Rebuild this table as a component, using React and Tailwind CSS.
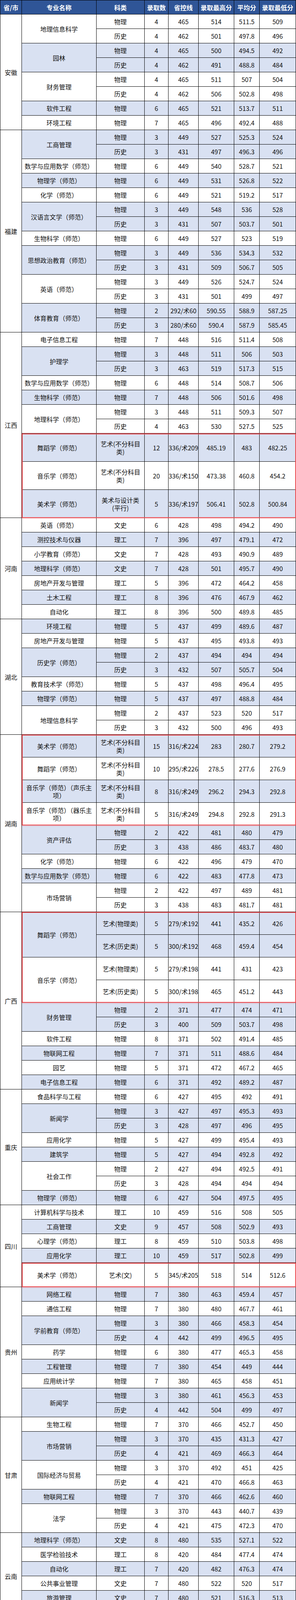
import React from "react";

const WL = "物理", HS = "历史", WS = "文史", LG = "理工", PT = "普通";
const ART = "艺术(不分科目\n类)";

const DATA = [
  { p: "安徽", g: [
    { m: "地理信息科学", r: [[WL,"4","465","514","511.5","509"],[HS,"4","462","501","497.8","496"]] },
    { m: "园林", r: [[WL,"4","465","500","494.5","492"],[HS,"4","462","491","488.8","484"]] },
    { m: "财务管理", r: [[WL,"4","465","511","507","504"],[HS,"4","462","506","502.8","498"]] },
    { m: "软件工程", r: [[WL,"6","465","521","513.7","511"]] },
    { m: "环境工程", r: [[WL,"7","465","496","492.4","488"]] },
  ]},
  { p: "福建", g: [
    { m: "工商管理", r: [[WL,"3","449","527","525.3","524"],[HS,"3","431","497","496.3","496"]] },
    { m: "数学与应用数学（师范）", r: [[WL,"6","449","540","528.7","521"]] },
    { m: "物理学（师范）", r: [[WL,"6","449","531","526.8","522"]] },
    { m: "化学（师范）", r: [[WL,"6","449","521","519.2","517"]] },
    { m: "汉语言文学（师范）", r: [[WL,"3","449","548","536","528"],[HS,"3","431","507","503.7","501"]] },
    { m: "生物科学（师范）", r: [[WL,"6","449","527","523","519"]] },
    { m: "思想政治教育（师范）", r: [[WL,"3","449","536","534.3","532"],[HS,"3","431","509","506.7","505"]] },
    { m: "英语（师范）", r: [[WL,"3","449","526","524.7","524"],[HS,"3","431","501","499","497"]] },
    { m: "体育教育（师范）", r: [[WL,"2","292/术60","590.55","588.9","587.25"],[HS,"3","280/术60","590.4","587.9","585.45"]] },
  ]},
  { p: "江西", g: [
    { m: "电子信息工程", r: [[WL,"7","448","516","511.4","508"]] },
    { m: "护理学", r: [[WL,"3","448","511","506","503"],[HS,"3","463","519","517.3","515"]] },
    { m: "数学与应用数学（师范）", r: [[WL,"6","448","514","508.7","506"]] },
    { m: "生物科学（师范）", r: [[WL,"7","448","506","501.6","498"]] },
    { m: "地理科学（师范）", r: [[WL,"3","448","511","509.3","507"],[HS,"4","463","530","527.5","525"]] },
    { m: "舞蹈学（师范）", hl: true, h: "h-[72px]", r: [[ART,"12","336/术209","485.19","483","482.25"]] },
    { m: "音乐学（师范）", hl: true, h: "h-[72px]", r: [[ART,"20","336/术150","473.38","460.8","454.2"]] },
    { m: "美术学（师范）", hl: true, h: "h-[72px]", r: [["美术与设计类\n(平行)","5","336/术197","506.41","502.8","500.84"]] },
  ]},
  { p: "河南", g: [
    { m: "英语（师范）", r: [[WS,"6","428","498","494.2","490"]] },
    { m: "测控技术与仪器", r: [[LG,"7","396","497","479.1","472"]] },
    { m: "小学教育（师范）", r: [[WS,"7","428","493","490.9","489"]] },
    { m: "地理科学（师范）", r: [[WS,"7","428","501","495.7","490"]] },
    { m: "房地产开发与管理", r: [[LG,"5","396","472","464.2","458"]] },
    { m: "土木工程", r: [[LG,"8","396","476","467.9","462"]] },
    { m: "自动化", r: [[LG,"8","396","500","489.8","485"]] },
  ]},
  { p: "湖北", g: [
    { m: "环境工程", r: [[WL,"5","437","499","489.6","487"]] },
    { m: "房地产开发与管理", r: [[WL,"5","437","495","493.8","493"]] },
    { m: "历史学（师范）", r: [[WL,"2","437","494","494","494"],[HS,"3","432","507","505.7","504"]] },
    { m: "教育技术学（师范）", r: [[WL,"5","437","498","496.4","495"]] },
    { m: "物理学（师范）", r: [[WL,"5","437","497","488.8","484"]] },
    { m: "地理信息科学", r: [[WL,"2","437","523","520","517"],[HS,"3","432","500","496","493"]] },
  ]},
  { p: "湖南", g: [
    { m: "美术学（师范）", hl: true, h: "h-[58px]", r: [[ART,"15","316/术224","283","280.7","279.2"]] },
    { m: "舞蹈学（师范）", hl: true, h: "h-[58px]", r: [[ART,"10","295/术226","278.5","277.6","276.9"]] },
    { m: "音乐学（师范）（声乐主\n项）", hl: true, h: "h-[58px]", r: [[ART,"8","316/术249","296.2","294.3","292.8"]] },
    { m: "音乐学（师范）（器乐主\n项）", hl: true, h: "h-[58px]", r: [[ART,"5","316/术249","294.8","292.8","291.3"]] },
    { m: "资产评估", r: [[WL,"2","422","481","480","479"],[HS,"3","438","486","483.7","480"]] },
    { m: "化学（师范）", r: [[WL,"6","422","496","479","470"]] },
    { m: "数学与应用数学（师范）", r: [[WL,"6","422","483","477.8","473"]] },
    { m: "市场营销", r: [[WL,"2","422","497","489","481"],[HS,"3","438","483","481.7","481"]] },
  ]},
  { p: "广西", g: [
    { m: "舞蹈学（师范）", hl: true, h: "h-[58px]", r: [["艺术(物理类)","5","279/术192","441","435.2","426"],["艺术(历史类)","5","300/术192","468","459.4","454"]] },
    { m: "音乐学（师范）", hl: true, h: "h-[58px]", r: [["艺术(物理类)","5","279/术198","441","431","423"],["艺术(历史类)","5","300/术198","465","451.2","443"]] },
    { m: "财务管理", r: [[WL,"2","371","477","474","471"],[HS,"3","400","509","503.7","498"]] },
    { m: "软件工程", r: [[WL,"8","371","502","491.4","485"]] },
    { m: "物联网工程", r: [[WL,"7","371","511","488.6","484"]] },
    { m: "园艺", r: [[WL,"5","371","472","467.2","465"]] },
    { m: "电子信息工程", r: [[WL,"6","371","492","489.2","487"]] },
  ]},
  { p: "重庆", g: [
    { m: "食品科学与工程", r: [[WL,"6","427","495","492","491"]] },
    { m: "新闻学", r: [[WL,"3","427","497","495.3","493"],[HS,"3","428","497","496","495"]] },
    { m: "应用化学", r: [[WL,"5","427","499","495.4","493"]] },
    { m: "建筑学", r: [[WL,"5","427","494","492.8","492"]] },
    { m: "社会工作", r: [[WL,"2","427","494","492.5","491"],[HS,"3","428","494","494","494"]] },
    { m: "物理学（师范）", r: [[WL,"6","427","504","497.5","495"]] },
  ]},
  { p: "四川", g: [
    { m: "计算机科学与技术", r: [[LG,"10","459","516","508","505"]] },
    { m: "工商管理", r: [[WS,"9","457","508","502.9","493"]] },
    { m: "心理学（师范）", r: [[LG,"8","459","510","503.8","498"]] },
    { m: "应用化学", r: [[LG,"10","459","517","502.8","499"]] },
    { m: "美术学（师范）", hl: true, h: "h-[62px]", r: [["艺术(文)","5","345/术205","518","514","512.6"]] },
  ]},
  { p: "贵州", g: [
    { m: "网络工程", r: [[WL,"7","380","463","459.4","457"]] },
    { m: "通信工程", r: [[WL,"7","380","480","467.7","461"]] },
    { m: "学前教育（师范）", r: [[WL,"3","380","466","458.3","454"],[HS,"4","442","499","496.5","495"]] },
    { m: "药学", r: [[WL,"6","380","477","465.3","458"]] },
    { m: "工程管理", r: [[WL,"7","380","454","449","444"]] },
    { m: "应用统计学", r: [[WL,"7","380","465","458","451"]] },
    { m: "新闻学", r: [[WL,"3","380","461","456.3","453"],[HS,"4","442","504","499","497"]] },
  ]},
  { p: "甘肃", g: [
    { m: "生物工程", r: [[WL,"7","370","466","452.7","450"]] },
    { m: "市场营销", r: [[WL,"3","370","435","431.3","427"],[HS,"4","421","469","466.3","464"]] },
    { m: "国际经济与贸易", r: [[WL,"3","370","492","451","425"],[HS,"4","421","470","466.8","463"]] },
    { m: "物联网工程", r: [[WL,"7","370","466","462.6","460"]] },
    { m: "法学", r: [[WL,"3","370","443","440.7","439"],[HS,"4","421","475","472.3","470"]] },
  ]},
  { p: "云南", g: [
    { m: "地理科学（师范）", r: [[WS,"8","480","535","527.1","522"]] },
    { m: "医学检验技术", r: [[LG,"8","420","484","477.4","474"]] },
    { m: "自动化", r: [[LG,"7","420","482","476.3","474"]] },
    { m: "公共事业管理", r: [[WS,"7","480","522","520","517"]] },
    { m: "旅游管理", r: [[WS,"7","480","521","516.3","513"]] },
    { m: "数据科学与大数据技术", r: [[LG,"8","420","491","479.6","474"]] },
  ]},
  { p: "陕西", g: [
    { m: "土木工程", r: [[LG,"7","372","444","440","435"]] },
    { m: "汉语言文学（师范）", r: [[WS,"7","397","478","474.6","472"]] },
    { m: "光电信息科学与工程", r: [[LG,"7","372","450","445.3","442"]] },
    { m: "法学", r: [[WS,"7","397","473","471.6","471"]] },
    { m: "软件工程", r: [[LG,"7","372","462","452","447"]] },
  ]},
  { p: "海南", g: [
    { m: "国际经济与贸易", r: [[PT,"5","483","581","579.8","578"]] },
    { m: "旅游管理", r: [[PT,"5","483","580","579.2","578"]] },
    { m: "教育技术学（师范）", r: [[PT,"5","483","584","576.2","568"]] },
    { m: "科学教育（师范）", r: [[PT,"5","483","604","585","578"]] },
    { m: "材料科学与工程", r: [[PT,"5","483","563","546.2","539"]] },
    { m: "汉语言文学（师范）", r: [[PT,"5","483","598","590.6","585"]] },
  ]},
];

const HEAD = ["省/市", "专业名称", "科类", "录取数", "省控线", "录取最高分", "平均分", "录取最低分"];
const W = ["w-[55px] shrink-0", "w-[191px] shrink-0", "w-[123px] shrink-0", "w-[61px] shrink-0", "w-[77px] shrink-0", "w-[91px] shrink-0", "w-[65px] shrink-0", "flex-1 min-w-0"];
const CELL = "flex items-center justify-center text-center border-r border-b border-black";

function Header() {
  return (
    <div className="flex h-[36px] bg-[#2f5597] text-white font-bold">
      {HEAD.map((t, i) => (
        <div key={i} className={`${W[i]} ${CELL} whitespace-nowrap`}>{t}</div>
      ))}
    </div>
  );
}

function Group({ g }) {
  const bg = g.blue ? "bg-[#d9e1f2]" : "bg-white";
  const h = g.h || "h-[37px]";
  return (
    <div className="flex">
      <div className={`${W[1]} ${CELL} ${bg} whitespace-pre-line leading-5 px-1`}>{g.m}</div>
      <div className="flex-1 min-w-0 flex flex-col">
        {g.r.map((row, ri) => (
          <div key={ri} className={`flex ${h}`}>
            {row.map((c, ci) => (
              <div
                key={ci}
                className={`${W[ci + 2]} ${CELL} ${bg} ${ci === 0 ? "whitespace-pre-line leading-5" : "whitespace-nowrap"}`}
              >
                {c}
              </div>
            ))}
          </div>
        ))}
      </div>
    </div>
  );
}

function Province({ p }) {
  const segs = [];
  p.g.forEach((g) => {
    const last = segs[segs.length - 1];
    if (last && last.hl === !!g.hl) last.items.push(g);
    else segs.push({ hl: !!g.hl, items: [g] });
  });
  return (
    <div className="flex">
      <div className={`${W[0]} ${CELL} bg-white`}>{p.p}</div>
      <div className="flex-1 min-w-0 flex flex-col">
        {segs.map((s, si) =>
          s.hl ? (
            <div key={si} className="relative flex flex-col">
              {s.items.map((g, gi) => <Group key={gi} g={g} />)}
              <div className="absolute inset-0 pointer-events-none border-2 border-[#ea4a4f] shadow-[0_0_3px_1px_rgba(234,74,79,0.45)]" />
            </div>
          ) : (
            <React.Fragment key={si}>
              {s.items.map((g, gi) => <Group key={gi} g={g} />)}
            </React.Fragment>
          )
        )}
      </div>
    </div>
  );
}

export default function App() {
  let idx = 0;
  const provinces = DATA.map((p) => ({
    ...p,
    g: p.g.map((g) => ({ ...g, blue: idx++ % 2 === 1 })),
  }));
  return (
    <div className="w-[757px] bg-white text-[16px] text-[#111] font-['Noto_Sans_CJK_SC','Noto_Sans',sans-serif]">
      <div className="border-l border-t border-black">
        <Header />
        {provinces.map((p, i) => (
          <Province key={i} p={p} />
        ))}
      </div>
    </div>
  );
}
